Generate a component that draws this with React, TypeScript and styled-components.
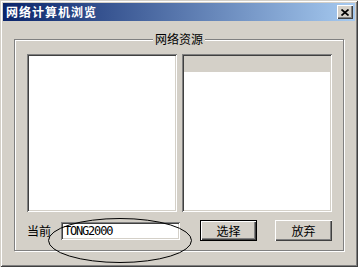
import React from 'react';
import styled, {createGlobalStyle} from 'styled-components';

const face = '#d4d0c8';
const shadow = '#808080';
const dark = '#404040';

const GlobalStyle = createGlobalStyle`
	html, body {
		margin: 0;
		padding: 0;
		background: ${face};
	}
	* {
		box-sizing: border-box;
	}
`;

const Window = styled.div`
	position: relative;
	width: 358px;
	height: 267px;
	padding: 3px;
	display: flex;
	flex-direction: column;
	background: ${face};
	box-shadow: inset 1px 1px 0 ${face}, inset -1px -1px 0 ${dark}, inset 2px 2px 0 #fff,
		inset -2px -2px 0 ${shadow};
	font-family: 'Noto Sans CJK SC', 'DejaVu Sans', sans-serif;
	font-size: 12px;
	color: #000;
`;

const TitleBar = styled.div`
	height: 18px;
	display: flex;
	align-items: center;
	justify-content: space-between;
	padding: 0 2px 0 3px;
	background: linear-gradient(to right, #0a246a, #a6caf0);
`;

const Title = styled.span`
	color: #fff;
	font-weight: bold;
	font-size: 12px;
	line-height: 14px;
	letter-spacing: 1px;
`;

const CloseButton = styled.div`
	width: 16px;
	height: 14px;
	display: flex;
	align-items: center;
	justify-content: center;
	background: ${face};
	box-shadow: inset 1px 1px 0 #fff, inset -1px -1px 0 ${dark}, inset -2px -2px 0 ${shadow};
`;

const Body = styled.div`
	padding: 18px 0 0 11px;
`;

const GroupBox = styled.div`
	position: relative;
	width: 330px;
	height: 212px;
	border: 1px solid ${shadow};
	box-shadow: 1px 1px 0 #fff, inset 1px 1px 0 #fff;
	padding: 14px 11px 9px 12px;
	display: flex;
	flex-direction: column;
`;

const Legend = styled.span`
	position: absolute;
	top: -8px;
	left: 50%;
	transform: translateX(-50%);
	padding: 0 2px;
	line-height: 14px;
	background: ${face};
	white-space: nowrap;
`;

const Lists = styled.div`
	display: flex;
	gap: 5px;
	height: 158px;
`;

const sunken = `
	box-shadow: inset 1px 1px 0 ${shadow}, inset -1px -1px 0 #fff, inset 2px 2px 0 ${dark},
		inset -2px -2px 0 ${face};
`;

const ListBox = styled.div`
	width: 150px;
	height: 158px;
	padding: 2px;
	background: #fff;
	display: flex;
	flex-direction: column;
	${sunken}
`;

const HeaderStrip = styled.div`
	height: 16px;
	background: ${face};
`;

const BottomRow = styled.div`
	margin-top: 8px;
	height: 21px;
	display: flex;
	align-items: center;
`;

const Label = styled.span`
	width: 34px;
	line-height: 14px;
`;

const TextBox = styled.div`
	align-self: flex-start;
	margin-top: 2px;
	width: 119px;
	height: 18px;
	padding: 2px 0 0 3px;
	background: #fff;
	font-family: 'DejaVu Sans Mono', 'Liberation Mono', monospace;
	font-size: 12px;
	line-height: 14px;
	letter-spacing: -1.2px;
	${sunken}
`;

const Button = styled.div<{$default?: boolean}>`
	width: 57px;
	height: 21px;
	margin-left: ${({$default}) => ($default ? '20px' : '18px')};
	display: flex;
	align-items: center;
	justify-content: center;
	line-height: 14px;
	background: ${face};
	${({$default}) =>
		$default
			? `box-shadow: inset 0 0 0 1px #000, inset 2px 2px 0 #fff, inset -2px -2px 0 ${dark}, inset -3px -3px 0 ${shadow};`
			: `box-shadow: inset 1px 1px 0 #fff, inset -1px -1px 0 ${dark}, inset -2px -2px 0 ${shadow};`}
`;

const Ellipse = styled.svg`
	position: absolute;
	left: 47px;
	top: 217px;
	pointer-events: none;
`;

export default function App() {
	return (
		<>
			<GlobalStyle />
			<Window>
				<TitleBar>
					<Title>网络计算机浏览</Title>
					<CloseButton>
						<svg width="8" height="7" viewBox="0 0 8 7">
							<path d="M0.5 0.5 L7.5 6.5 M7.5 0.5 L0.5 6.5" stroke="#000" strokeWidth="1.7" />
						</svg>
					</CloseButton>
				</TitleBar>
				<Body>
					<GroupBox>
						<Legend>网络资源</Legend>
						<Lists>
							<ListBox />
							<ListBox>
								<HeaderStrip />
							</ListBox>
						</Lists>
						<BottomRow>
							<Label>当前</Label>
							<TextBox>TONG2000</TextBox>
							<Button $default>选择</Button>
							<Button>放弃</Button>
						</BottomRow>
					</GroupBox>
				</Body>
				<Ellipse width="146" height="47" viewBox="0 0 146 47">
					<ellipse cx="73" cy="23.5" rx="71.5" ry="22" fill="none" stroke="#000" strokeWidth="1" />
				</Ellipse>
			</Window>
		</>
	);
}
